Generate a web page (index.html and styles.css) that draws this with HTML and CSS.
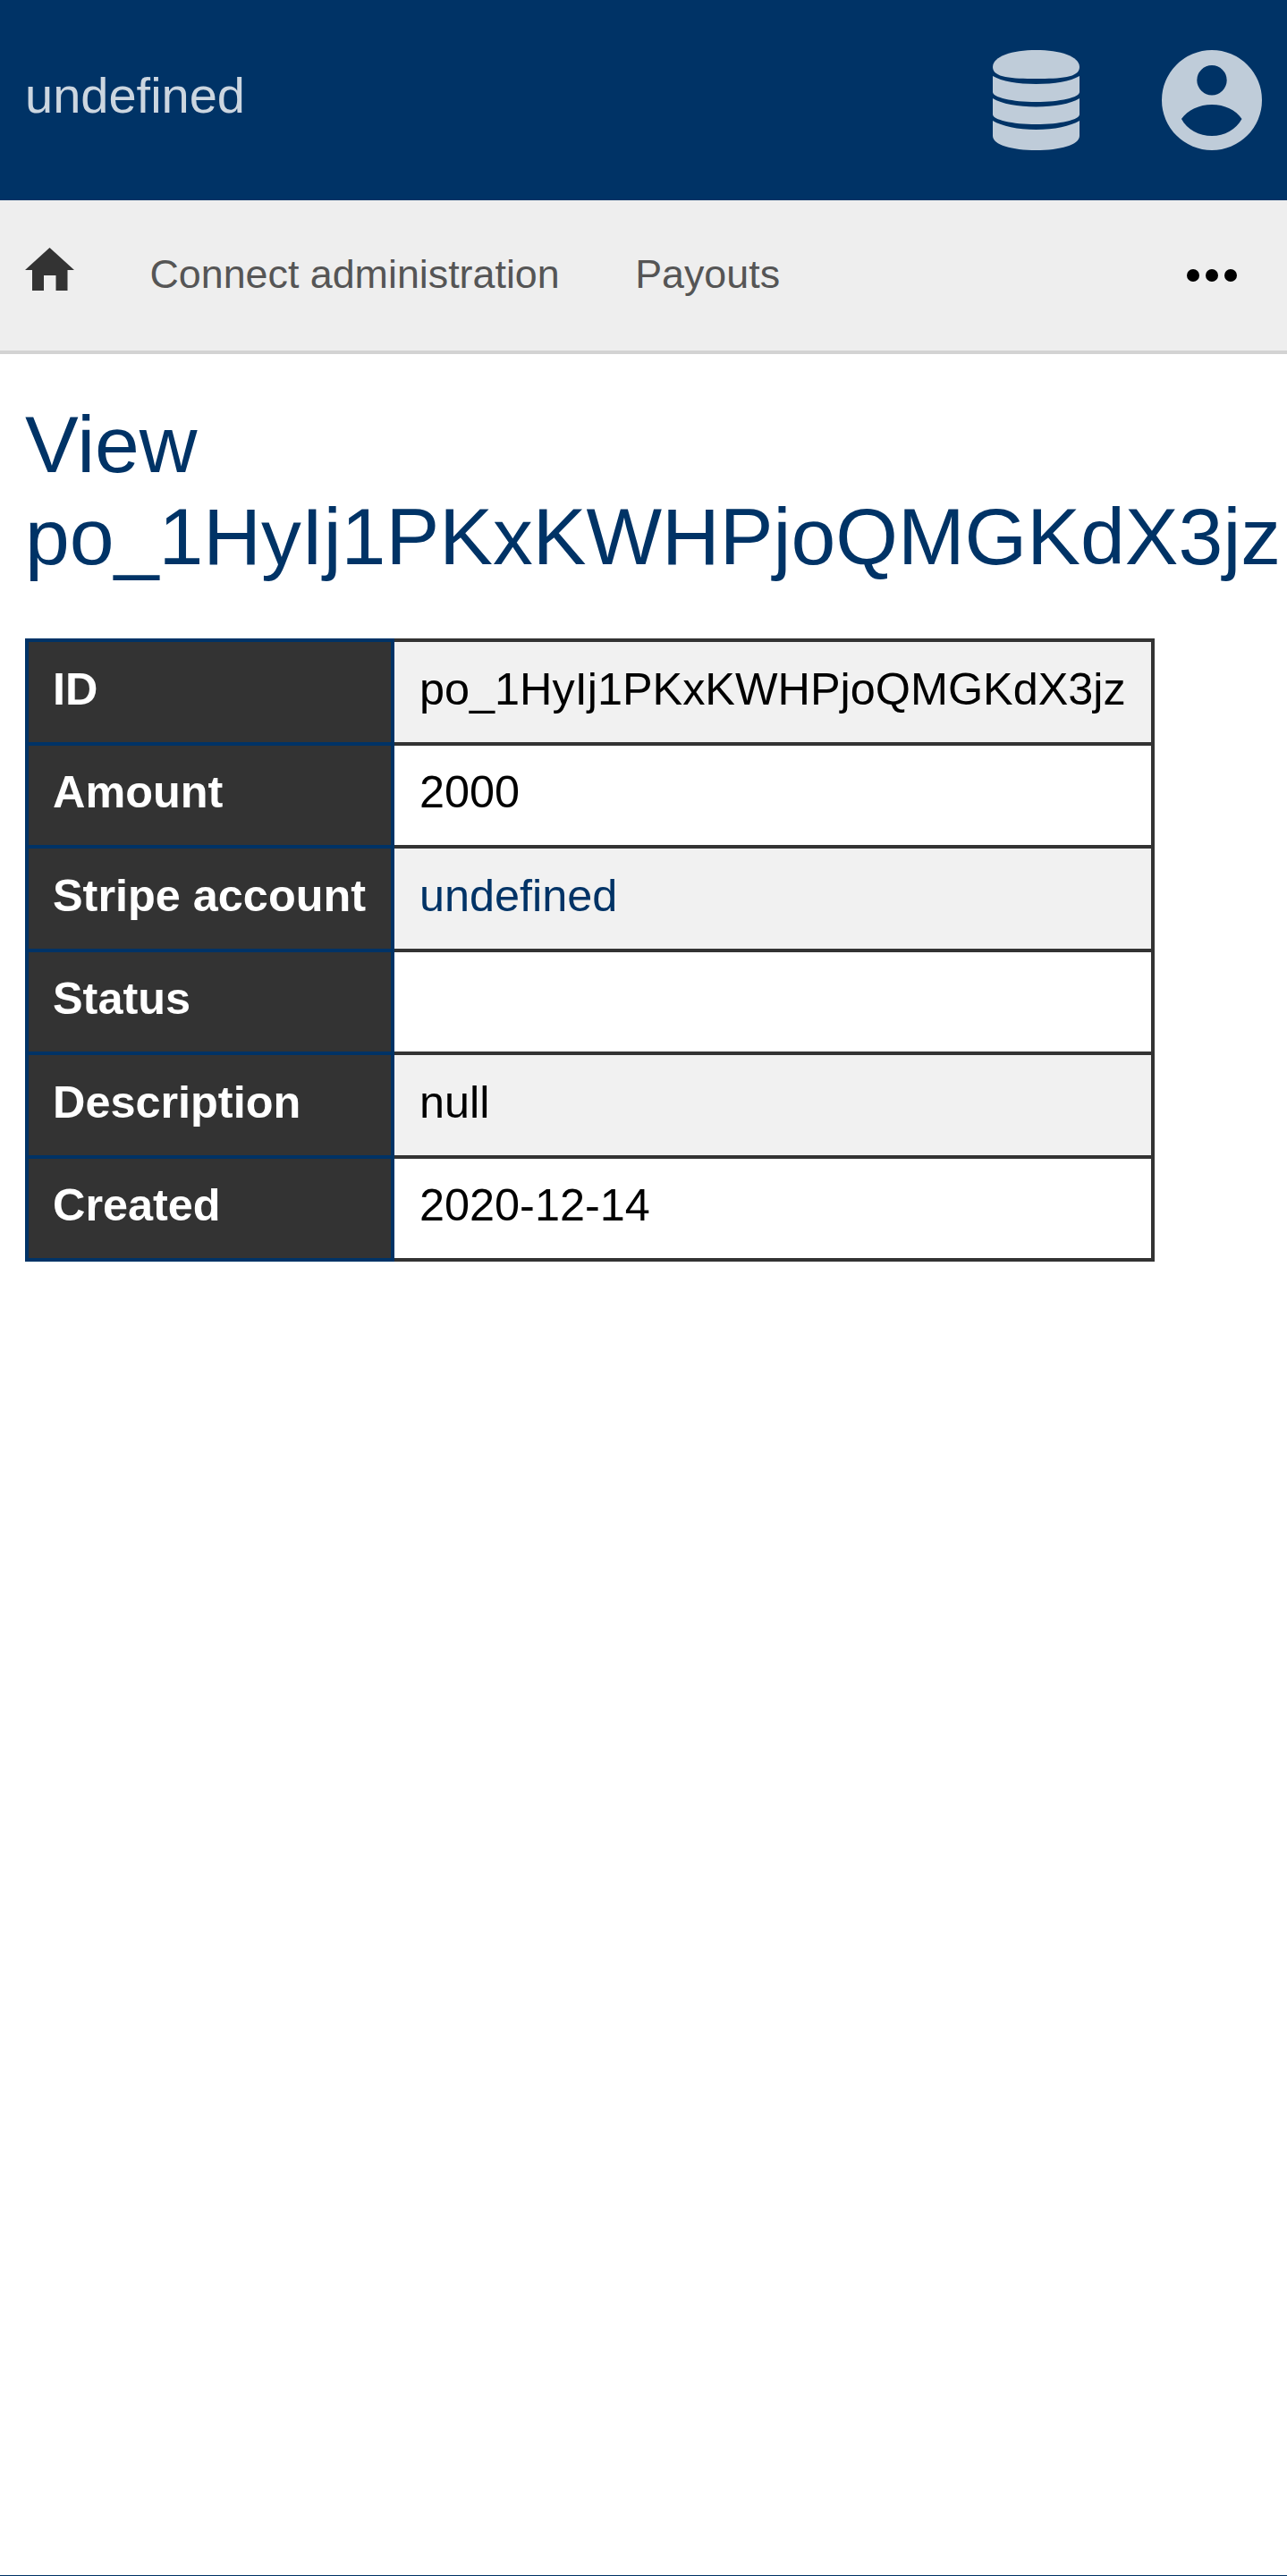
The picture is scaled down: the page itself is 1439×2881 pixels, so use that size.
FILE: index.html
```html
<!DOCTYPE html>
<html lang="en">
<head>
    <meta charset="UTF-8">
    <meta name="viewport" content="width=device-width, initial-scale=1.0">
    <title>View po_1HyIj1PKxKWHPjoQMGKdX3jz</title>
    <link rel="stylesheet" href="styles.css">
</head>
<body>
    <header class="site-header">
        <span class="site-name">undefined</span>
        <div class="header-icons">
            <svg class="header-icon db-icon" viewBox="0 0 97 112" aria-hidden="true">
                <path d="M48.500 0C21.700 0 0 7 0 19s21.700 13 48.500 13S97 31 97 19 75.300 0 48.500 0z"/>
                <path d="M0 29c10 6 28 9 48.500 9S87 35 97 29v18c0 6-21.700 11-48.500 11S0 53 0 47z"/>
                <path d="M0 54c10 6 28 9.500 48.500 9.500S87 60 97 54v18c0 6-21.700 11-48.500 11S0 78 0 72z"/>
                <path d="M0 79c10 6 28 10 48.500 10S87 85 97 79v17c0 10-21.700 16-48.500 16S0 106 0 96z"/>
            </svg>
            <svg class="header-icon user-icon" viewBox="0 0 112 112" aria-hidden="true">
                <path fill-rule="evenodd" d="M56 0a56 56 0 1 0 0 112A56 56 0 0 0 56 0zm0 17a16.700 16.700 0 1 1 0 33.400 16.700 16.700 0 0 1 0-33.400zM22 77c7-10 20-16 34-16s27 6 33.500 16C83 89 70 96 56 96S28 89 22 77z"/>
            </svg>
        </div>
    </header>
    <nav class="main-nav">
        <a class="nav-home" href="#">
            <svg viewBox="0 0 55 48" aria-hidden="true">
                <path d="M27.500 0 55 25h-7.500v23h-13V31H21v17H8V25H0z"/>
            </svg>
        </a>
        <a class="nav-link" href="#">Connect administration</a>
        <a class="nav-link" href="#">Payouts</a>
        <a class="nav-more" href="#" aria-label="More">
            <span class="dot"></span><span class="dot"></span><span class="dot"></span>
        </a>
    </nav>
    <main class="content">
        <h1>View po_1HyIj1PKxKWHPjoQMGKdX3jz</h1>
        <table class="details">
            <tr>
                <th>ID</th>
                <td>po_1HyIj1PKxKWHPjoQMGKdX3jz</td>
            </tr>
            <tr>
                <th>Amount</th>
                <td>2000</td>
            </tr>
            <tr>
                <th>Stripe account</th>
                <td><a href="#">undefined</a></td>
            </tr>
            <tr>
                <th>Status</th>
                <td></td>
            </tr>
            <tr>
                <th>Description</th>
                <td>null</td>
            </tr>
            <tr>
                <th>Created</th>
                <td>2020-12-14</td>
            </tr>
        </table>
    </main>
</body>
</html>
```

FILE: styles.css
```css
html, body {
    height: 100%;
}

body {
    margin: 0;
    font-family: "Liberation Sans", Arial, sans-serif;
    background-color: #fff;
    color: #000;
    display: flex;
    flex-direction: column;
    border-bottom: 1px solid #036;
    box-sizing: border-box;
}

.site-header {
    height: 224px;
    padding: 0 28px;
    background-color: #036;
    display: flex;
    align-items: center;
    justify-content: space-between;
    flex-shrink: 0;
}

.site-name {
    font-size: 56px;
    color: #ccd6e0;
    margin-bottom: 12px;
}

.header-icons {
    display: flex;
    align-items: center;
    gap: 92px;
}

.header-icon {
    height: 112px;
    fill: #bfccd9;
    display: block;
}

.db-icon {
    width: 97px;
}

.user-icon {
    width: 112px;
}

.main-nav {
    height: 168px;
    padding: 0 28px;
    background-color: #eee;
    border-bottom: 4px solid #d3d3d3;
    display: flex;
    align-items: center;
    gap: 84.5px;
    flex-shrink: 0;
}

.nav-home {
    margin-bottom: 14px;
}

.nav-home svg {
    width: 55px;
    height: 48px;
    fill: #333;
    display: block;
}

.nav-link {
    font-size: 44.8px;
    color: #555;
    text-decoration: none;
    margin-bottom: 3px;
}

.nav-more {
    margin-left: auto;
    width: 112px;
    display: flex;
    justify-content: center;
    gap: 7px;
}

.dot {
    width: 14px;
    height: 14px;
    border-radius: 50%;
    background-color: #000;
}

.content {
    padding: 0 28px;
}

h1 {
    margin: 50px 0 62px;
    font-size: 89.6px;
    line-height: 103px;
    font-weight: normal;
    color: #036;
}

.details {
    border-collapse: collapse;
    font-size: 50.4px;
}

.details th,
.details td {
    height: 104.500px;
    padding: 0 28px 7px;
    text-align: left;
}

.details th {
    padding-left: 27px;
    padding-right: 28px;
    background-color: #333;
    color: #fff;
    border: 4px solid #036;
}

.details td {
    border: 4px solid #333;
}

.details tr:nth-child(odd) td {
    background-color: #f1f1f1;
}

.details a {
    color: #036;
    text-decoration: none;
}
```
